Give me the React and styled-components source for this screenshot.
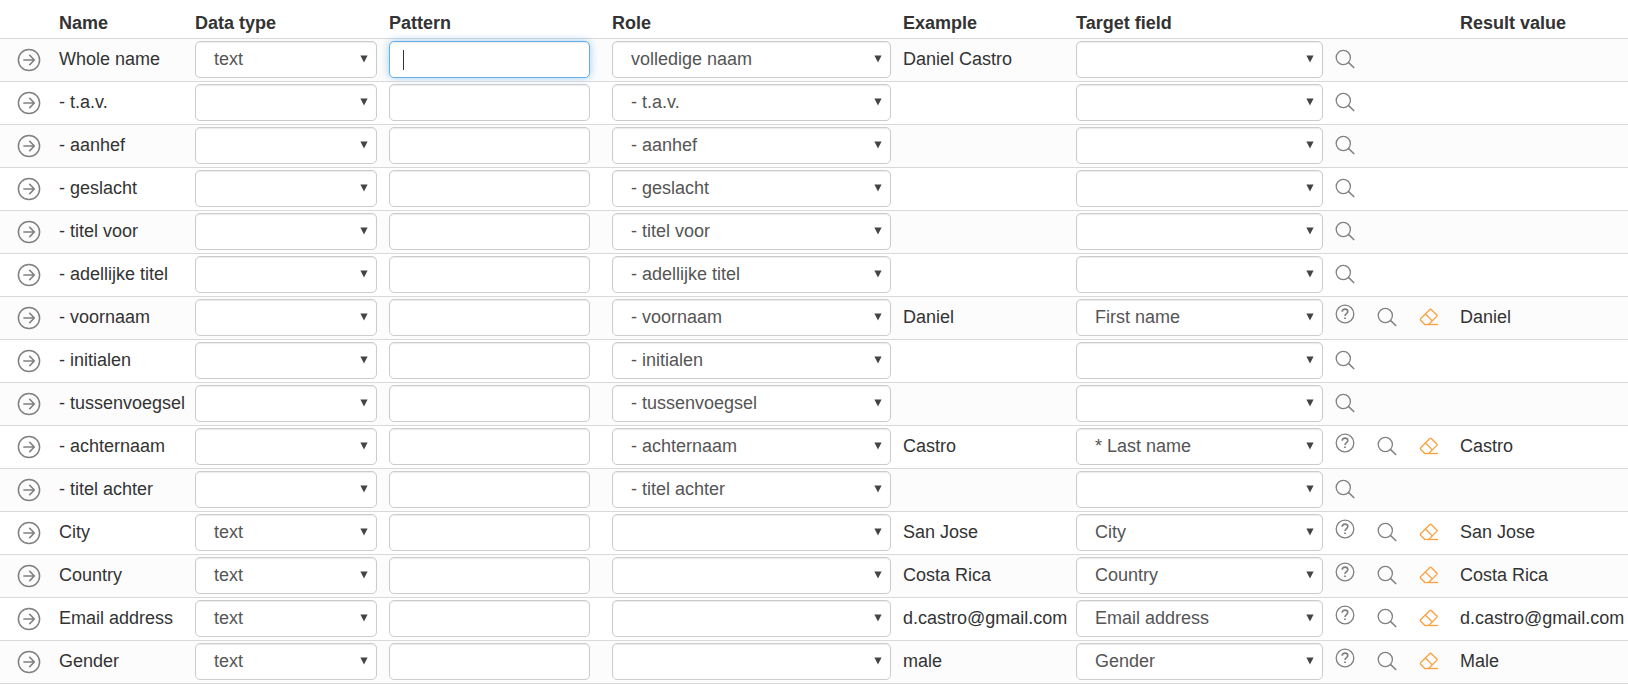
import React, { useState } from "react";
import styled, { createGlobalStyle, css } from "styled-components";

const columns = [53, 136, 194, 223, 291, 173, 259, 125, 174];

const typeOptions = ["", "text", "number", "date"];
const roleOptions = [
  "",
  "volledige naam",
  "- t.a.v.",
  "- aanhef",
  "- geslacht",
  "- titel voor",
  "- adellijke titel",
  "- voornaam",
  "- initialen",
  "- tussenvoegsel",
  "- achternaam",
  "- titel achter",
];
const targetOptions = [
  "",
  "First name",
  "* Last name",
  "City",
  "Country",
  "Email address",
  "Gender",
];

const fields = [
  { name: "Whole name", type: "text", role: "volledige naam", example: "Daniel Castro" },
  { name: "- t.a.v.", role: "- t.a.v." },
  { name: "- aanhef", role: "- aanhef" },
  { name: "- geslacht", role: "- geslacht" },
  { name: "- titel voor", role: "- titel voor" },
  { name: "- adellijke titel", role: "- adellijke titel" },
  { name: "- voornaam", role: "- voornaam", example: "Daniel", target: "First name" },
  { name: "- initialen", role: "- initialen" },
  { name: "- tussenvoegsel", role: "- tussenvoegsel" },
  { name: "- achternaam", role: "- achternaam", example: "Castro", target: "* Last name" },
  { name: "- titel achter", role: "- titel achter" },
  { name: "City", type: "text", example: "San Jose", target: "City" },
  { name: "Country", type: "text", example: "Costa Rica", target: "Country" },
  { name: "Email address", type: "text", example: "d.castro@gmail.com", target: "Email address" },
  { name: "Gender", type: "text", example: "male", target: "Gender", result: "Male" },
];

function ArrowIcon() {
  return (
    <svg width="24" height="24" viewBox="0 0 24 24" fill="none" stroke="currentColor" strokeWidth="1.5">
      <circle cx="12" cy="12" r="10.6" />
      <path d="M6.3 12H17M12.3 6.9L17.3 12L12.3 17.1" />
    </svg>
  );
}

function SearchIcon() {
  return (
    <svg width="20" height="20" viewBox="0 0 20 20" fill="none" stroke="currentColor" strokeWidth="1.3">
      <circle cx="8.3" cy="8.5" r="7.1" />
      <path d="M13.4 13.4L19.2 19" strokeWidth="1.5" />
    </svg>
  );
}

function HelpIcon() {
  return (
    <svg width="20" height="20" viewBox="0 0 20 20" fill="none" stroke="currentColor" strokeWidth="1.3">
      <circle cx="10" cy="10" r="8.8" />
      <path d="M7.2 7.8C7.2 6 8.4 5.1 10 5.1C11.7 5.1 12.8 6.1 12.8 7.5C12.8 9.6 10 9.7 10 12" strokeWidth="1.6" />
      <path d="M10 13.4V15" strokeWidth="1.8" />
    </svg>
  );
}

function EraserIcon() {
  return (
    <svg width="20" height="20" viewBox="0 0 20 20" fill="none" stroke="currentColor" strokeWidth="1.3" strokeLinejoin="round">
      <path d="M5.6 17.3L1.6 13.3Q0.9 12.5 1.6 11.8L10.9 2.5Q11.6 1.8 12.3 2.5L17.8 8Q18.5 8.7 17.8 9.4L9.9 17.3" />
      <path d="M6.4 7L13.3 13.9" />
      <path d="M5 17.5H19" />
    </svg>
  );
}

function SelectBox({ label, options, defaultValue = "" }) {
  return (
    <StSelectWrap>
      <StSelect aria-label={label} defaultValue={defaultValue}>
        {options.map((option) => (
          <option key={option} value={option}>
            {option}
          </option>
        ))}
      </StSelect>
      <StCaret viewBox="0 0 8 8">
        <path d="M0.4 0.5H7.6L4 7.5Z" />
      </StCaret>
    </StSelectWrap>
  );
}

function FieldRow({ field, focused }) {
  const [pattern, setPattern] = useState("");
  const { name, type, role, example, target, result } = field;

  return (
    <StRow>
      <StIconCell>
        <StIconButton type="button" aria-label={`Open ${name}`}>
          <ArrowIcon />
        </StIconButton>
      </StIconCell>
      <StTextCell>{name}</StTextCell>
      <StCell>
        <SelectBox label={`Data type of ${name}`} options={typeOptions} defaultValue={type} />
      </StCell>
      <StPatternCell>
        <StInput
          type="text"
          aria-label={`Pattern of ${name}`}
          autoFocus={focused}
          value={pattern}
          $empty={!pattern}
          onChange={(e) => setPattern(e.target.value)}
        />
      </StPatternCell>
      <StCell>
        <SelectBox label={`Role of ${name}`} options={roleOptions} defaultValue={role} />
      </StCell>
      <StTextCell>{example}</StTextCell>
      <StCell>
        <SelectBox label={`Target field of ${name}`} options={targetOptions} defaultValue={target} />
      </StCell>
      <StTextCell>
        <StActions>
          {target && (
            <StIconButton type="button" aria-label="Help" $raised>
              <HelpIcon />
            </StIconButton>
          )}
          <StIconButton type="button" aria-label="Search">
            <SearchIcon />
          </StIconButton>
          {target && (
            <StIconButton type="button" aria-label="Clear" $color="#fba03f">
              <EraserIcon />
            </StIconButton>
          )}
        </StActions>
      </StTextCell>
      <StTextCell>{target && (result || example)}</StTextCell>
    </StRow>
  );
}

export default function App() {
  return (
    <>
      <GlobalStyle />
      <StTable>
        <colgroup>
          {columns.map((width, i) => (
            <StCol key={i} $width={width} />
          ))}
        </colgroup>
        <thead>
          <tr>
            <StHead />
            <StHead>Name</StHead>
            <StHead>Data type</StHead>
            <StHead>Pattern</StHead>
            <StHead>Role</StHead>
            <StHead>Example</StHead>
            <StHead>Target field</StHead>
            <StHead />
            <StHead>Result value</StHead>
          </tr>
        </thead>
        <tbody>
          {fields.map((field, i) => (
            <FieldRow key={field.name} field={field} focused={i === 0} />
          ))}
        </tbody>
      </StTable>
    </>
  );
}

const GlobalStyle = createGlobalStyle`
  body {
    margin: 0;
    background: #fff;
    color: #333;
    font-family: "Liberation Sans", Arial, sans-serif;
    font-size: 18px;
    line-height: 24px;
  }
`;

const StTable = styled.table`
  width: 100%;
  table-layout: fixed;
  border-spacing: 0;
  border-bottom: 1px solid #d9d9d9;
`;

const StCol = styled.col`
  width: ${({ $width }) => $width}px;
`;

const StHead = styled.th`
  padding: 11px 6px 3px;
  text-align: left;
  font-weight: 700;
  white-space: nowrap;
`;

const StRow = styled.tr`
  &:nth-child(odd) {
    background: #fcfcfc;
  }
`;

const StCell = styled.td`
  padding: 2px 6px 3px;
  border-top: 1px solid #d9d9d9;
  vertical-align: middle;
  white-space: nowrap;
`;

const StTextCell = styled(StCell)`
  padding-bottom: 5px;
`;

const StIconCell = styled(StCell)`
  padding-left: 17px;
`;

const StPatternCell = styled(StCell)`
  padding-right: 16px;
`;

const control = css`
  box-sizing: border-box;
  width: 100%;
  height: 37px;
  border: 1px solid #ccc;
  border-radius: 5px;
  background: #fff;
  box-shadow: inset 0 1px 1px rgba(0, 0, 0, 0.08);
  color: #555;
  font: inherit;
  outline: none;

  &:focus {
    border-color: #66afe9;
    box-shadow: inset 0 1px 1px rgba(0, 0, 0, 0.08),
      0 0 8px rgba(102, 175, 233, 0.6);
  }
`;

const StSelectWrap = styled.div`
  display: grid;
  align-items: center;
`;

const StSelect = styled.select`
  ${control}
  grid-area: 1 / 1;
  appearance: none;
  padding: 0 24px 2px 18px;
`;

const StCaret = styled.svg`
  grid-area: 1 / 1;
  justify-self: end;
  width: 8px;
  height: 8px;
  margin: 0 9px 1px 0;
  fill: #444;
  pointer-events: none;
`;

const StInput = styled.input`
  ${control}
  display: block;
  padding: 0 13px;

  /* steady insertion bar while the box is still empty */
  ${({ $empty }) =>
    $empty &&
    css`
      &:focus {
        caret-color: transparent;
        background: linear-gradient(#333, #333) 13px center / 1px 20px no-repeat
          #fff;
      }
    `}
`;

const StActions = styled.div`
  display: flex;
  align-items: center;
  gap: 22px;
`;

const StIconButton = styled.button`
  display: flex;
  padding: 0;
  padding-bottom: ${({ $raised }) => ($raised ? 6 : 0)}px;
  border: 0;
  background: none;
  color: ${({ $color }) => $color || "#808080"};
  cursor: pointer;
`;
